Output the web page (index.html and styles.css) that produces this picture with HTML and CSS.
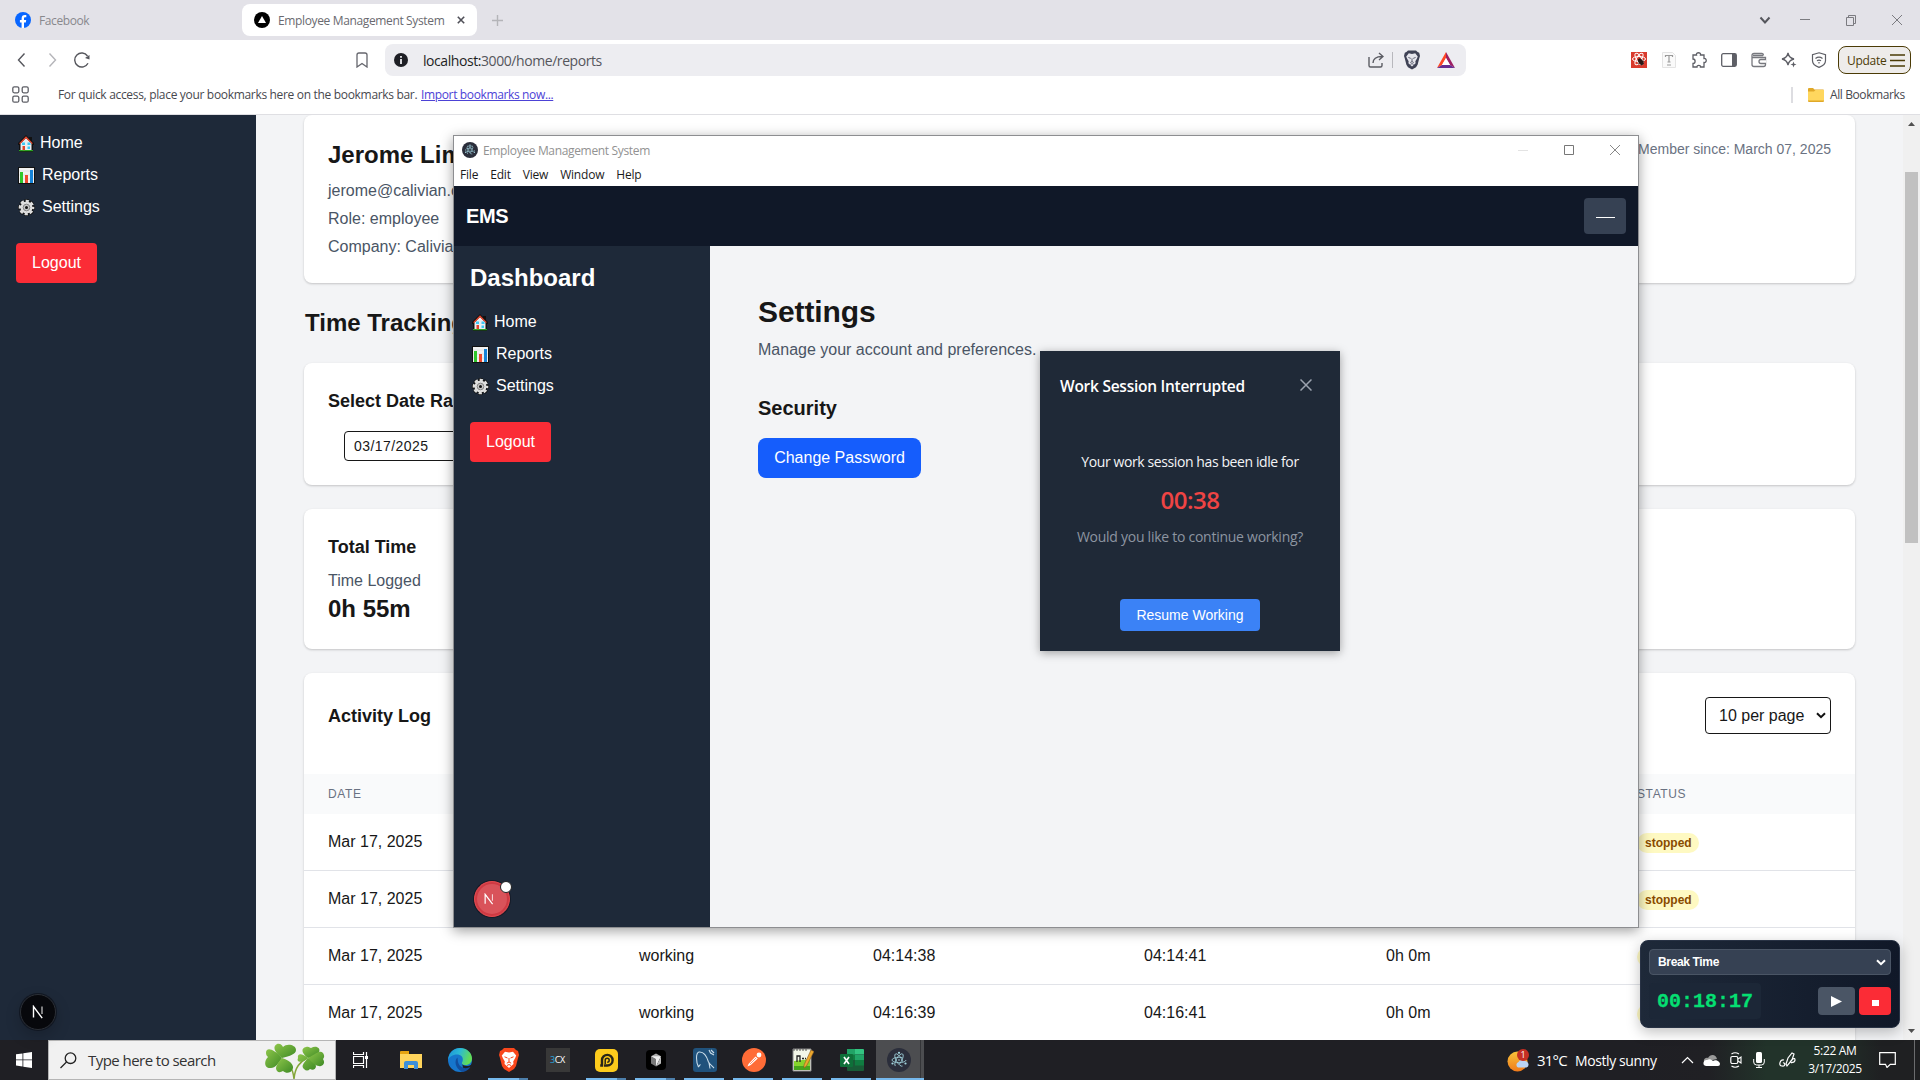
FILE: index.html
```html
<!DOCTYPE html>
<html lang="en">
<head>
<meta charset="utf-8">
<title>Employee Management System</title>
<link rel="stylesheet" href="styles.css">
</head>
<body>
<svg class="defs" width="0" height="0" aria-hidden="true">
  <symbol id="house" viewBox="0 0 16 17"><path d="M8 0 0 8v2h1v7h14v-7h1V8l-2-2V2h-3v1z" fill="#111"/><path d="M8 3 2.500 8.500V15h11V8.500z" fill="#e9eef2"/><path d="m8 1.200-6.800 7 1 .9L8 3.300l5.800 5.800 1-.9z" fill="#e8452c"/><path d="M4 7.500h3v2.500H4zM9.500 7.500h3V10h-3zM9.500 11.500h2.500V14H9.500z" fill="#3fc8f4"/><path d="M4.500 11h2.500v4.500H4.500z" fill="#e0452c"/><path d="M1 15.200h14v1H1z" fill="#35c52c"/></symbol>
  <symbol id="chart" viewBox="0 0 17 17"><path d="M0 0h17v17H0z" fill="#111"/><path d="M1 1h15v15H1z" fill="#f1f1f1"/><path d="M1 4h15M1 8h15M1 12h15" stroke="#d8dde0" stroke-width=".7"/><path d="M2 5h3v11H2z" fill="#2fc62b"/><path d="M7 8h3v8H7z" fill="#f0482d"/><path d="M12 3h3v13h-3z" fill="#1683d8"/></symbol>
  <symbol id="gear" viewBox="0 0 17 17"><circle cx="8.500" cy="8.500" r="7.200" fill="#111"/><circle cx="8.500" cy="8.500" r="7" fill="none" stroke="#111" stroke-width="3" stroke-dasharray="3.900 1.598" stroke-dashoffset="1.950"/><circle cx="8.500" cy="8.500" r="6" fill="#dedede"/><circle cx="8.500" cy="8.500" r="6.500" fill="none" stroke="#dedede" stroke-width="2.600" stroke-dasharray="3.200 1.905" stroke-dashoffset="1.600"/><circle cx="8.500" cy="8.500" r="3.300" fill="#c8c8c8" stroke="#858585"/><circle cx="8.500" cy="8.500" r="1.500" fill="#111"/></symbol>
  <symbol id="electron" viewBox="0 0 24 24"><circle cx="12" cy="12" r="12" fill="#2b2e3b"/><g fill="none" stroke="#a3d5e0" stroke-width=".8"><ellipse cx="12" cy="12" rx="7" ry="2.700" stroke-dasharray="27 5" transform="rotate(0 12 12)"/><ellipse cx="12" cy="12" rx="7" ry="2.700" stroke-dasharray="27 5" transform="rotate(60 12 12)"/><ellipse cx="12" cy="12" rx="7" ry="2.700" stroke-dasharray="27 5" transform="rotate(120 12 12)"/></g><g fill="#a3d5e0"><circle cx="12" cy="12" r=".8"/><circle cx="5.500" cy="15.500" r="1.100"/><circle cx="18.500" cy="15.500" r="1.100"/><circle cx="12" cy="4.800" r="1.100"/></g></symbol>
  <symbol id="lion" viewBox="0 0 20 24"><path d="M5 0h10l2 2 2 1 1 4-1 3-2 8-2 3-5 3-5-3-2-3-2-8-1-3 1-4 2-1z" fill="var(--shield)"/><path d="m10 4.500 4-.8 3.200 3.800-1 2.500-2 3.500.3 2.500-4.500 4-4.500-4 .3-2.500-2-3.500-1-2.500L6 3.700z" fill="var(--face)"/><path d="m5.500 8.800 3 1.200M14.500 8.800l-3 1.200M10 10v4M7.800 15.200 10 14l2.200 1.200M8 17.500l2-1 2 1" stroke="var(--shield)" stroke-width="1" fill="none"/></symbol>
  <symbol id="nlogo" viewBox="0 0 14 14"><path d="M2.500 12.500v-11l8.700 11.600" fill="none" stroke="#fff" stroke-width="1.400"/><path d="M11 1.500v7.500" stroke="#fff" stroke-width="1.300" opacity=".75"/></symbol>
</svg>

<header class="tabs">
  <div class="tab tab-idle">
    <svg width="16" height="16" viewBox="0 0 16 16"><circle cx="8" cy="8" r="8" fill="#0866ff"/><path d="M6.600 16v-5.600H4.900V8h1.700V6.700c0-2.700 1.200-3.700 3.400-3.700l1.300.1v2.200h-.9c-1.100 0-1.400.4-1.400 1.500V8h2.200l-.4 2.400H9V16z" fill="#fff"/></svg>
    <span class="t-fb">Facebook</span>
  </div>
  <div class="tab tab-active">
    <svg width="16" height="16" viewBox="0 0 16 16"><circle cx="8" cy="8" r="8"/><path d="m8 4 4 7H4z" fill="#fff"/></svg>
    <span class="t-tab">Employee Management System</span>
    <svg class="tab-x" width="8" height="8" viewBox="0 0 8 8"><path d="m.8.800 6.400 6.400M7.200.8.800 7.200" stroke="#505058" stroke-width="1.600"/></svg>
  </div>
  <svg class="plus" width="11" height="11" viewBox="0 0 11 11"><path d="M5.500 0v11M0 5.500h11" stroke="#b4b4b8" stroke-width="1.400"/></svg>
  <div class="win-ctl">
    <svg width="12" height="12" viewBox="0 0 12 12"><path d="m1.500 3.500 4.500 5 4.500-5" fill="none" stroke="#55565c" stroke-width="2"/></svg>
    <svg width="12" height="12" viewBox="0 0 12 12"><path d="M1 5.500h10" stroke="#7b7b80"/></svg>
    <svg width="12" height="12" viewBox="0 0 12 12"><path d="M1.500 3.500h7v8h-7zM3.500 3.500v-2h7v8h-2" fill="none" stroke="#7b7b80"/></svg>
    <svg width="12" height="12" viewBox="0 0 12 12"><path d="m1 1 10 10M11 1 1 11" stroke="#7b7b80"/></svg>
  </div>
</header>

<div class="toolbar">
  <div class="nav">
    <svg width="16" height="16" viewBox="0 0 16 16"><path d="m10.500 1.500-6 6.500 6 6.500" fill="none" stroke="#55565c" stroke-width="1.400"/></svg>
    <svg width="16" height="16" viewBox="0 0 16 16"><path d="m5.500 1.500 6 6.500-6 6.500" fill="none" stroke="#b5b5b9" stroke-width="1.400"/></svg>
    <svg width="16" height="16" viewBox="0 0 16 16"><path d="M14 11.200A7 7 0 1 1 13.500 4" fill="none" stroke="#55565c" stroke-width="1.400"/><path d="M15.500 3v4.500L11 6z" fill="#55565c"/></svg>
  </div>
  <svg class="mark" width="12" height="16" viewBox="0 0 12 16"><path d="M1 3a2 2 0 0 1 2-2h6a2 2 0 0 1 2 2v12l-5-3.500L1 15z" fill="none" stroke="#65666d" stroke-width="1.300"/></svg>
  <div class="address">
    <svg width="14" height="14" viewBox="0 0 14 14"><circle cx="7" cy="7" r="7" fill="#1e1f25"/><path d="M7 3v1.800M7 6v5" stroke="#ededf1" stroke-width="1.800"/></svg>
    <span class="url">localhost:<span>3000/home/reports</span></span>
    <div class="address-end">
      <svg width="16" height="16" viewBox="0 0 16 16"><path d="M1 5v8.500q0 1.500 1.500 1.500h10q1.500 0 1.500-1.500V11M5 11c0-4 3-6.500 9-6.500M11 1l4 3.500L11 8" fill="none" stroke="#5b5c63" stroke-width="1.400"/></svg>
      <i></i>
      <svg class="lion-dark" width="16" height="20"><use href="#lion"/></svg>
      <svg class="bat" width="18" height="16" viewBox="0 0 18 16"><path d="M9 0 0 16l5-3 4-7z" fill="#ff4724"/><path d="m9 0 9 16-5-3-4-7z" fill="#9e1f63"/><path d="m0 16 5-3h8l5 3z" fill="#662d91"/><path d="m9 6 4 7H5z" fill="#fff"/></svg>
    </div>
  </div>
  <div class="exts">
    <svg width="16" height="16" viewBox="0 0 16 16"><path d="M0 0h16v16H0z" fill="#d93a2c"/><g fill="none" stroke="#fff" stroke-width="1"><ellipse cx="8" cy="7" rx="6.500" ry="2.500"/><ellipse cx="8" cy="7" rx="6.500" ry="2.500" transform="rotate(60 8 7)"/><ellipse cx="8" cy="7" rx="6.500" ry="2.500" transform="rotate(120 8 7)"/></g><ellipse cx="9.800" cy="9.800" rx="2.300" ry="3.600" transform="rotate(-35 9.800 9.800)" fill="#2b1815"/><path d="m7.500 8 5.500 4M7 12l6-3M8.500 6.500l2 7" stroke="#2b1815" stroke-width=".7"/></svg>
    <svg width="16" height="16" viewBox="0 0 16 16"><path d="M1.500.5h10l3 3v12h-13z" fill="#fafafa" stroke="#e4e4e4"/><path d="M4.500 5V3.500h7V5M8 3.500V10M6.500 10h3M6 13h4" fill="none" stroke="#999" stroke-width="1.200"/></svg>
    <svg width="16" height="16" viewBox="0 0 16 16"><path d="M2 3h3.500c-.8-3 4.800-3 4 0H13v3.500c3-.6 3 4.600 0 4V15H9.500c.5-2.300-3.800-2.300-3.500 0H2v-3.500c2.800 0 2.800-4.500 0-4.500z" fill="none" stroke="#5e5f66" stroke-width="1.300"/></svg>
    <svg width="16" height="16" viewBox="0 0 16 16"><rect x=".7" y="1.700" width="14.600" height="12.600" rx="1.500" fill="none" stroke="#5e5f66" stroke-width="1.300"/><path d="M11 2h4v12h-4z" fill="#5e5f66"/></svg>
    <svg width="16" height="16" viewBox="0 0 16 16"><path d="M1 4V12.500Q1 14.500 3 14.500h9.500q2 0 2-2V5.500H1V3.500Q1 1.500 3 1.500h8q1.500 0 1.500 2M2 3.500h10" fill="none" stroke="#77787e" stroke-width="1.300"/><path d="M15 7.500h-5a1.800 1.800 0 0 0 0 4h5" fill="#fff" stroke="#77787e" stroke-width="1.300"/></svg>
    <svg width="16" height="16" viewBox="0 0 16 16"><path d="M7 1q1 5 6 6-5 1-6 6Q6 8 1 7q5-1 6-6z" fill="none" stroke="#5e5f66" stroke-width="1.300"/><path d="m12.500 9.500.8 2.200 2.200.8-2.200.8-.8 2.200-.8-2.200-2.200-.8 2.200-.8z" fill="#5e5f66"/></svg>
    <svg width="16" height="16" viewBox="0 0 16 16"><path d="m8 .8 6.500 2v6c0 3.400-3 5.400-6.500 6.600-3.500-1.200-6.500-3.200-6.500-6.600v-6zM4.500 6.500q3.500-2.700 7 0M6 8.800q2-1.500 4 0M8 10v1.500" fill="none" stroke="#5e5f66" stroke-width="1.200"/></svg>
  </div>
  <div class="update"><span class="t-update">Update</span><svg width="15" height="13" viewBox="0 0 15 13"><path d="M0 1h15M0 6.500h15M0 12h15" stroke="#4b3b06" stroke-width="1.400"/></svg></div>
</div>

<div class="bookmarks">
  <svg width="17" height="17" viewBox="0 0 17 17"><g fill="none" stroke="#5e5f66" stroke-width="1.300"><rect x=".8" y=".8" width="6" height="6" rx="1.500"/><rect x="10.200" y=".8" width="6" height="6" rx="1.500"/><rect x=".8" y="10.200" width="6" height="6" rx="1.500"/><rect x="10.200" y="10.200" width="6" height="6" rx="1.500"/></g></svg>
  <span class="t-hint">For quick access, place your bookmarks here on the bookmarks bar.</span>
  <a class="t-import">Import bookmarks now...</a>
  <div class="all-bm"><i></i><svg width="16" height="14" viewBox="0 0 16 14"><path d="M0 1q0-1 1-1h4l1.500 1.500H15q1 0 1 1V13q0 1-1 1H1q-1 0-1-1z" fill="#e0a828"/><path d="M0 3.500h6L7.500 2H16v10.500H0z" fill="#ffd75e"/></svg><span class="t-all">All Bookmarks</span></div>
</div>

<main class="page">
  <aside class="side">
    <nav>
      <div class="link"><svg width="16" height="17"><use href="#house"/></svg><span>Home</span></div>
      <div class="link"><svg width="17" height="17"><use href="#chart"/></svg><span>Reports</span></div>
      <div class="link"><svg width="17" height="17"><use href="#gear"/></svg><span>Settings</span></div>
    </nav>
    <button class="logout">Logout</button>
    <div class="next"><svg width="14" height="14"><use href="#nlogo"/></svg></div>
  </aside>
  <section class="content">
    <div class="card profile">
      <div><h2>Jerome Lim</h2><p>jerome@calivian.com</p><p>Role: employee</p><p>Company: Calivian</p></div>
      <span class="since">Member since: March 07, 2025</span>
    </div>
    <h2 class="tt">Time Tracking</h2>
    <div class="card range"><h3>Select Date Range</h3><div class="date">03/17/2025</div></div>
    <div class="card total"><h3>Total Time</h3><p>Time Logged</p><strong>0h 55m</strong></div>
    <div class="card log">
      <div class="log-head"><h3>Activity Log</h3><div class="per">10 per page<svg width="10" height="7" viewBox="0 0 10 7"><path d="m1 1.200 4 4 4-4" fill="none" stroke="#111" stroke-width="2"/></svg></div></div>
      <div class="row th"><span>DATE</span><span></span><span></span><span></span><span></span><span>STATUS</span></div>
      <div class="row"><span>Mar 17, 2025</span><span></span><span></span><span></span><span></span><span><b>stopped</b></span></div>
      <div class="row"><span>Mar 17, 2025</span><span></span><span></span><span></span><span></span><span><b>stopped</b></span></div>
      <div class="row"><span>Mar 17, 2025</span><span>working</span><span>04:14:38</span><span>04:14:41</span><span>0h 0m</span><span><b></b></span></div>
      <div class="row"><span>Mar 17, 2025</span><span>working</span><span>04:16:39</span><span>04:16:41</span><span>0h 0m</span><span><b></b></span></div>
    </div>
  </section>
  <div class="scroll">
    <svg width="7" height="4" viewBox="0 0 7 4"><path d="M0 4h7L3.500 0z" fill="#505050"/></svg>
    <div class="thumb"></div>
    <svg width="7" height="4" viewBox="0 0 7 4"><path d="M0 0h7L3.500 4z" fill="#505050"/></svg>
  </div>
</main>

<section class="window">
  <div class="w-title"><svg width="16" height="16"><use href="#electron"/></svg><span class="t-win">Employee Management System</span>
    <div class="w-ctl">
      <svg width="10" height="10" viewBox="0 0 10 10"><path d="M0 5.500h10" stroke="#e3e3e3"/></svg>
      <svg width="10" height="10" viewBox="0 0 10 10"><path d="M.5.500h9v9h-9z" fill="none" stroke="#777"/></svg>
      <svg width="10" height="10" viewBox="0 0 10 10"><path d="m0 0 10 10M10 0 0 10" stroke="#888"/></svg>
    </div>
  </div>
  <div class="w-menu"><span>File</span><span>Edit</span><span>View</span><span>Window</span><span>Help</span></div>
  <div class="w-bar"><b>EMS</b><div class="w-min"><i></i></div></div>
  <div class="w-body">
    <aside class="side inner">
      <h2>Dashboard</h2>
      <nav>
        <div class="link"><svg width="16" height="17"><use href="#house"/></svg><span>Home</span></div>
        <div class="link"><svg width="17" height="17"><use href="#chart"/></svg><span>Reports</span></div>
        <div class="link"><svg width="17" height="17"><use href="#gear"/></svg><span>Settings</span></div>
      </nav>
      <button class="logout">Logout</button>
      <div class="next err"><svg width="12" height="12"><use href="#nlogo"/></svg></div>
    </aside>
    <div class="settings">
      <h1>Settings</h1>
      <p>Manage your account and preferences.</p>
      <h3>Security</h3>
      <button class="change">Change Password</button>
    </div>
  </div>
</section>

<section class="dialog">
  <div class="d-head"><span class="t-dt">Work Session Interrupted</span><svg width="12" height="12" viewBox="0 0 12 12"><path d="m.5.500 11 11M11.500.5l-11 11" stroke="#9ca3af" stroke-width="1.500"/></svg></div>
  <span class="d-1">Your work session has been idle for</span>
  <span class="d-2">00:38</span>
  <span class="d-3">Would you like to continue working?</span>
  <button class="resume">Resume Working</button>
</section>

<section class="timer">
  <div class="t-select">Break Time<svg width="10" height="7" viewBox="0 0 10 7"><path d="m1 1.200 4 4 4-4" fill="none" stroke="#fff" stroke-width="2"/></svg></div>
  <div class="t-row"><span class="clock">00:18:17</span>
    <div class="play"><svg width="11" height="11" viewBox="0 0 11 11"><path d="M0 0v11l11-5.500z" fill="#fff"/></svg></div>
    <div class="stop"><i></i></div>
  </div>
</section>

<footer class="taskbar">
  <div class="start"><svg width="16" height="16" viewBox="0 0 16 16"><path d="M0 2.300 6.500 1.400v6.100H0zM7.300 1.300 16 0v7.500H7.300zM0 8.300h6.500v6.200L0 13.600zM7.300 8.300H16V16l-8.700-1.300z" fill="#fff"/></svg></div>
  <div class="search">
    <svg width="17" height="17" viewBox="0 0 17 17"><circle cx="10.500" cy="6.200" r="5.300" fill="none" stroke="#222" stroke-width="1.300"/><path d="m6.500 10-6 6" stroke="#222" stroke-width="1.300"/></svg>
    <span class="t-search">Type here to search</span>
    <svg class="clover" width="60" height="36" viewBox="0 0 60 36"><defs><linearGradient id="lf" x1="0" y1="0" x2="1" y2="1"><stop offset="0" stop-color="#8ec64a"/><stop offset="1" stop-color="#3e8a25"/></linearGradient></defs><path d="M17 17c8 3 11 9 12 19M42 15c-7 4-12 9-13 21" fill="none" stroke="#84a63a" stroke-width="1.500"/><g fill="url(#lf)"><path d="M17 15C8 8 8 3 12 1c3-1 5 1 6 3 4-4 13-2 13 3 0 4-6 6-14 8z"/><path d="M17 15C8 5 1 4 1 10c0 2 1 3 2 4-5 5-3 12 3 11 4 0 8-5 11-10z"/><path d="M17 15c-6 7-7 10-5 13 2 2 4 1 6 0 3 3 8 2 9-1 3-3 0-9-10-12z"/><path d="M43 15c-7-5-7-10-2-11 3-1 4 1 5 1 5-3 10 0 8 4-1 3-5 5-11 6z"/><path d="M43 15c-7-6-11-4-10 0-2 4 3 6 10 0zM43 15c-5 6-7 8-4 11 2 2 4 2 6 0 3 2 6 0 6-3-1-4-4-6-8-8z"/><path d="M43 15c9-5 12-8 15-5 2 3 1 5 0 6 3 5-1 8-4 7-4 0-7-4-11-8z"/></g></svg>
  </div>
  <div class="slot"><svg width="16" height="16" viewBox="0 0 16 16"><path d="M.5 0v2.500h10V0M.5 16v-2.500h10V16M.5 4.500h10v7H.5zM13.500 0v16" fill="none" stroke="#fff" stroke-width="1.200"/><path d="M12 4h3v3h-3z" fill="#fff"/></svg></div>
  <div class="slot"><svg width="22" height="19" viewBox="0 0 22 19"><path d="M0 1q0-1 1-1h8v3h12q1 0 1 1v13H0z" fill="#e6a311"/><path d="M0 3h22v14H0z" fill="#ffd45c"/><path d="M4 18v-6q0-2 2-2h10q2 0 2 2v6h-4v-4H8v4z" fill="#3d8fd9"/></svg></div>
  <div class="slot"><svg width="24" height="24" viewBox="0 0 24 24"><defs><linearGradient id="ed" x1="0" y1="0" x2="1" y2=".3"><stop offset="0" stop-color="#1b8fd8"/><stop offset=".5" stop-color="#2bb9d6"/><stop offset="1" stop-color="#62dc57"/></linearGradient></defs><circle cx="12" cy="12" r="12" fill="#1676cc"/><path d="M14 15c0 2 3 3.500 6 3 1.500-.3 3-1 4-2v8h-8z" fill="#202024"/><path d="M0 12C1 4 6 0 12 0c7 0 12 5 12 10.500 0 4-3 6.500-6.500 6.500-3 0-4.500-1.500-3-3.500C16 9 12.500 6.500 9 6.500 4.500 6.500 1 9 0 12z" fill="url(#ed)"/><path d="M9.500 9.500c-3.500 3-2.500 11 4.500 14.300 4 0 7-2.300 8.300-4.800-5 2.600-10.500.5-12-4-.6-2-.5-4-.8-5.500z" fill="#114f9f"/></svg></div>
  <div class="slot run multi"><svg class="lion-red" width="20" height="24"><use href="#lion"/></svg></div>
  <div class="slot"><div class="cx"><em>3</em>CX</div></div>
  <div class="slot run multi"><svg width="23" height="23" viewBox="0 0 23 23"><rect width="23" height="23" rx="5" fill="#fdcb1c"/><path d="M9 16.500h3.300a5.300 5.300 0 1 0-5.300-5.300v5.300H5.200" fill="none" stroke="#292518" stroke-width="2.400"/><path d="M10.200 15v-3.800a2 2 0 1 1 2 2" fill="none" stroke="#292518" stroke-width="1.500"/></svg></div>
  <div class="slot run multi"><svg width="20" height="20" viewBox="0 0 20 20"><rect width="20" height="20" rx="4" fill="#000"/><path d="m10 3.500 5 2.800-5 2.800-5-2.800z" fill="#aaa"/><path d="M5 6.300 10 9v7.500l-5-3z" fill="#777"/><path d="M5 6.300h10l-5 10.200V9z" fill="#eee"/><path d="M15 6.300v7.200l-5 3z" fill="#bbb"/></svg></div>
  <div class="slot run"><svg width="24" height="24" viewBox="0 0 24 24"><rect width="24" height="24" rx="3" fill="#20527c"/><path d="M5.500 19C3 14 2.500 5 6 4c5-.5 8 5 9.500 10 1 2 3 3.500 5.500 6M5.500 19c.5-1 1-2 2-2.500M16 15l1 5.500M16 2l1.500 3L21 7M18 2l3 3" fill="none" stroke="#c9dce9" stroke-width="1.100"/></svg></div>
  <div class="slot run"><svg width="24" height="24" viewBox="0 0 24 24"><circle cx="12" cy="12" r="12" fill="#ff6c37"/><path d="m5.500 18.500 1-2.500 7-7.500 2.300 2-7 6.500z" fill="#fff"/><path d="m8 16 6-6" stroke="#ff6c37" stroke-width=".7"/><circle cx="17" cy="7" r="2.400" fill="#fff"/></svg></div>
  <div class="slot run"><svg width="22" height="24" viewBox="0 0 22 24"><path d="M1 1h18v22H1z" fill="#f3f6e8" stroke="#888"/><path d="M2 13q9-1 16-2v11H2z" fill="#86d52c"/><path d="M2 18h16v4H2z" fill="#46a51c"/><path d="M5 14V8h3v6M10 10.500h2M13 10.500h1" fill="none" stroke="#222" stroke-width="1.300"/><path d="m12 17 7-15 3 1.500-7.500 14.500-2.500 2z" fill="#eca72d" stroke="#8a5b22" stroke-width=".6"/><path d="M2 1v2M5 1v2M8 1v2M11 1v2M14 1v2" stroke="#555"/></svg></div>
  <div class="slot run"><svg width="24" height="22" viewBox="0 0 24 22"><path d="M7 0h8v11H7z" fill="#21a366"/><path d="M15 0h8q1 0 1 1v4.500h-9z" fill="#33c481"/><path d="M7 5.500h8V11H7z" fill="#107c41"/><path d="M15 5.500h9V11h-9z" fill="#21a366"/><path d="M7 11h17v10q0 1-1 1H8q-1 0-1-1z" fill="#185c37"/><path d="M15 11h9v5.500h-9z" fill="#107c41"/><rect y="5" width="13" height="13" rx="1" fill="#0e7039"/><path d="m4 8 5 7M9 8l-5 7" stroke="#fff" stroke-width="1.700"/></svg></div>
  <div class="slot run current"><svg width="24" height="24"><use href="#electron"/></svg></div>
  <div class="tray">
    <div class="weather"><svg width="23" height="23" viewBox="0 0 23 23"><defs><linearGradient id="sun" x1="0" y1="0" x2="0" y2="1"><stop offset="0" stop-color="#f9c33a"/><stop offset="1" stop-color="#ef7a1b"/></linearGradient></defs><circle cx="10.500" cy="12.500" r="10" fill="url(#sun)"/><path d="M11 18.500a3 3 0 0 1 .5-5.500 4 4 0 0 1 6.500-1 3.400 3.400 0 0 1 1.500 6.500z" fill="#b9d4f5"/></svg><em>1</em></div>
    <span class="t-temp">31°C</span><span class="t-sun">Mostly sunny</span>
    <svg class="up" width="13" height="8" viewBox="0 0 13 8"><path d="m1 7 5.500-5.500L12 7" fill="none" stroke="#fff" stroke-width="1.200"/></svg>
    <svg class="cloud" width="17" height="11" viewBox="0 0 17 11"><path d="M1 7C0 3 4 2 5 3c2-4 8-4 9 1z" fill="#999"/><path d="M3 11a3 3 0 0 1 1-6c3-2 5 0 6 1 3-2 7 1 7 3q0 2-2 2z" fill="#fff"/></svg>
    <svg class="meet" width="12" height="16" viewBox="0 0 12 16"><rect x=".8" y="4.500" width="7" height="7" rx="1.500" fill="none" stroke="#fff" stroke-width="1.200"/><path d="M8 7l3-2v6L8 9M1.500 2Q5-.5 9 2M1.500 14q3.500 2.500 7.500 0" fill="none" stroke="#fff" stroke-width="1.100"/></svg>
    <svg class="mic" width="12" height="16" viewBox="0 0 12 16"><rect x="3" width="6" height="11" rx="1.500" fill="#fff"/><path d="M.7 7v3q0 3 3 3h4.600q3 0 3-3V7M6 13v3M3 15.500h6" fill="none" stroke="#fff"/></svg>
    <svg class="pen" width="17" height="16" viewBox="0 0 17 16"><path d="M5 8c-4-1-6 6-2 6 4 1 3-4 1-3M7 12 9 6l4-5 2 1-2 6-5 6zM11 10c2-3 5-5 5-2s-3 2-4 3" fill="none" stroke="#fff" stroke-width="1.200"/></svg>
    <div class="when"><span class="t-time">5:22 AM</span><span class="t-date">3/17/2025</span></div>
    <svg class="note" width="17" height="16" viewBox="0 0 17 16"><path d="M.7.700h15.600v11.600h-5L8 15.500l-1.500-3.200H.7z" fill="none" stroke="#fff" stroke-width="1.200"/></svg>
    <i class="peek"></i>
  </div>
</footer>
</body>
</html>
```
FILE: styles.css
```css
* { box-sizing: border-box; }
body { margin: 0; width: 1920px; height: 1080px; overflow: hidden; position: relative; display: flex; flex-direction: column; background: #fff; font-family: "Liberation Sans", Arial, sans-serif; color: #171717; }
h1, h2, h3, p { margin: 0; }
svg { display: block; flex: none; }
i, em { font-style: normal; }
span { white-space: nowrap; }
button { font: 16px/24px "Liberation Sans", Arial, sans-serif; border: 0; color: #fff; padding: 8px 0; text-align: center; display: block; white-space: nowrap; }
.defs { position: absolute; }
.tabs, .toolbar, .bookmarks, .w-title, .w-menu, .taskbar, .dialog { font-family: "Open Sans", "Noto Sans", sans-serif; }

/* browser chrome */
.tabs { height: 40px; flex: none; background: #e3e2e8; display: flex; align-items: center; font-size: 12px; color: #6a6a70; }
.tab { display: flex; align-items: center; gap: 8px; }
.tab-idle { width: 242px; padding-left: 15px; color: #88888d; }
.tab-active { width: 235px; height: 32px; background: #fff; border-radius: 8px; padding-left: 12px; }
.t-fb { letter-spacing: -.4px; }
.t-tab { width: 167px; letter-spacing: -.36px; }
.tab-x { margin-left: 4px; }
.plus { margin-left: 15px; }
.win-ctl { margin-left: auto; margin-right: 17px; display: flex; gap: 34px; }
.win-ctl svg:first-child { margin-right: -6px; }
.toolbar { height: 40px; flex: none; display: flex; align-items: center; }
.nav { display: flex; gap: 14px; padding-left: 14px; width: 356px; }
.mark { margin-right: 17px; }
.address { width: 1081px; height: 32px; background: #ededf1; border-radius: 8px; display: flex; align-items: center; padding-left: 9px; }
.url { margin-left: 15px; font-size: 14px; color: #1e1f25; letter-spacing: -.43px; }
.url span { color: #55565c; }
.address-end { margin-left: auto; display: flex; align-items: center; }
.address-end i { width: 1px; height: 16px; background: #b8b8bd; margin: 0 11px 0 8px; }
.lion-dark { --shield: #3f4255; --face: #e5e5ec; }
.bat { margin: 0 11px 0 17px; }
.exts { display: flex; gap: 14px; margin-left: 165px; }
.update { width: 73px; height: 28px; margin-left: 11px; border: 1px solid #4b3b06; border-radius: 8px; background: #eeecea; display: flex; align-items: center; padding-left: 8px; gap: 4px; color: #4b3b06; font-size: 12px; }
.t-update { width: 39px; letter-spacing: -.3px; }
.bookmarks { height: 35px; flex: none; border-bottom: 1px solid #dfdfe3; display: flex; align-items: center; padding: 0 15px 5px 12px; font-size: 12px; color: #47484e; }
.t-hint { margin-left: 29px; width: 363px; letter-spacing: -.32px; }
.t-import { color: #4c42d6; text-decoration: underline; letter-spacing: -.36px; }
.all-bm { margin-left: auto; display: flex; align-items: center; }
.all-bm i { width: 2px; height: 16px; background: #dddde1; margin-right: 15px; }
.t-all { margin-left: 6px; width: 75px; letter-spacing: -.4px; }

/* reports page */
.page { flex: none; height: 925px; display: flex; background: #f3f4f6; }
.side { position: relative; width: 256px; flex: none; background: #1e2939; color: #fff; padding: 12px 16px; font-size: 16px; }
.link { height: 32px; display: flex; align-items: center; padding-left: 2px; gap: 6px; }
.link span { letter-spacing: 0; }
.link svg[width="17"] { margin-right: 1px; }
.logout { margin-top: 20px; width: 81px; background: #fb2c36; border-radius: 4px; }
.next { position: absolute; left: 20px; bottom: 10px; width: 36px; height: 36px; border-radius: 50%; background: #07080c; border: 1px solid #2b2f36; box-shadow: 0 0 0 1px #111722, 0 6px 16px rgba(0,0,0,.2); display: flex; align-items: center; justify-content: center; }
.next.err { background: #d9535a; border: 1px solid #e5484d; box-shadow: 0 0 0 1px #151b28, inset 0 0 0 2px #ce3a43; padding-right: 7px; }
.next.err::after { content: ""; position: absolute; right: -3px; top: -1px; width: 10px; height: 10px; border-radius: 50%; background: #fff; border: 1px solid #222; }
.content { width: 1647px; flex: none; padding: 0 48px; overflow: hidden; }
.card { background: #fff; border-radius: 8px; box-shadow: 0 1px 3px rgba(0,0,0,.1), 0 1px 2px rgba(0,0,0,.1); padding: 24px; }
h2 { font-size: 24px; line-height: 32px; }
h3 { font-size: 18px; line-height: 28px; }
p { color: #4a5565; font-size: 16px; line-height: 24px; }
.profile { height: 168px; display: flex; justify-content: space-between; }
.profile h2 { margin-bottom: 8px; }
.profile p { margin-bottom: 4px; }
.since { font-size: 14px; line-height: 20px; color: #6a7282; letter-spacing: 0; }
.tt { margin: 24px 0; padding-left: 1px; }
.range { height: 122px; }
.date { margin: 16px 0 0 16px; width: 160px; height: 30px; border: 1px solid #171717; border-radius: 4px; font-size: 14px; line-height: 28px; padding-left: 9px; letter-spacing: .45px; }
.total { height: 140px; margin-top: 24px; }
.total p { margin-top: 8px; }
.total strong { font-size: 24px; line-height: 32px; display: block; }
.log { height: 400px; margin-top: 24px; padding: 0; }
.log-head { height: 101px; padding: 24px; display: flex; justify-content: space-between; align-items: flex-start; }
.log-head h3 { margin-top: 5px; }
.per { width: 126px; height: 37px; border: 1px solid #171717; border-radius: 4px; padding: 0 4px 0 13px; font-size: 16px; display: flex; align-items: center; justify-content: space-between; }
.row { height: 57px; display: grid; grid-template-columns: 311px 234px 271px 242px 251px 1fr; align-items: center; padding-left: 24px; border-bottom: 1px solid #e1e3e8; font-size: 16px; }
.row.th { height: 40px; background: #f9fafb; border: 0; font-size: 12px; color: #6a7282; letter-spacing: .6px; }
.row b { display: inline-block; width: 62px; font-size: 12px; line-height: 20px; height: 20px; padding: 0 8px; border-radius: 10px; background: #fef9c2; color: #894b00; vertical-align: middle; margin-top: 2px; }
.scroll { width: 17px; background: #f0f0f0; display: flex; flex-direction: column; align-items: center; padding: 7px 0 7px; }
.thumb { width: 13px; height: 371px; margin: 46px 0 auto; background: #c1c1c1; }

/* desktop app window */
.window { position: absolute; left: 453px; top: 135px; width: 1186px; height: 793px; border: 1px solid #8d8e91; background: #fff; box-shadow: 0 3px 12px rgba(0,0,0,.38); display: flex; flex-direction: column; }
.w-title { height: 28px; display: flex; align-items: center; padding: 0 18px 0 8px; font-size: 12px; color: #929292; }
.t-win { margin-left: 5px; letter-spacing: -.34px; }
.w-ctl { margin-left: auto; display: flex; gap: 36px; }
.w-menu { height: 22px; display: flex; align-items: center; padding: 0 0 1px 6px; gap: 12px; font-size: 12px; color: #1b1b1b; letter-spacing: -.2px; }
.w-bar { height: 60px; flex: none; background: #101828; color: #fff; display: flex; align-items: center; justify-content: space-between; padding: 0 12px; font-size: 20px; }
.w-bar b { letter-spacing: -.4px; }
.w-min { width: 42px; height: 36px; background: #364153; border-radius: 4px; display: flex; align-items: center; justify-content: center; }
.w-min i { width: 19px; height: 1.5px; background: #fff; margin-top: 3px; }
.w-body { flex: 1; display: flex; background: #f3f4f6; }
.inner { padding-top: 16px; }
.inner h2 { margin-bottom: 12px; }
.settings { padding: 46px 48px; }
h1 { font-size: 30px; line-height: 40px; letter-spacing: -.1px; }
.settings p { margin-top: 6px; }
.settings h3 { font-size: 20px; margin: 32px 0 16px; }
.change { width: 163px; border-radius: 8px; background: #155dfc; }

/* idle dialog */
.dialog { position: absolute; left: 1040px; top: 351px; width: 300px; height: 300px; background: #1f2937; color: #fff; box-shadow: 0 2px 9px rgba(0,0,0,.35); display: flex; flex-direction: column; align-items: center; padding-top: 23px; font-size: 14px; }
.d-head { width: 100%; height: 24px; padding: 0 28px 0 20px; display: flex; align-items: center; justify-content: space-between; }
.d-head svg { margin-bottom: 2px; }
.t-dt { font-size: 15.5px; font-weight: 600; letter-spacing: -.26px; }
.d-1 { margin-top: 54px; line-height: 20px; color: #f3f4f6; letter-spacing: -.4px; }
.d-2 { margin-top: 12px; font-size: 24px; line-height: 32px; font-weight: 600; color: #ef4444; letter-spacing: -.5px; }
.d-3 { margin-top: 11px; line-height: 20px; color: #8d95a1; letter-spacing: -.26px; }
.resume { margin-top: 52px; width: 140px; height: 32px; padding: 0; font-size: 14px; line-height: 32px; background: #3b82f6; border-radius: 4px; }

/* floating timer */
.timer { position: absolute; left: 1640px; top: 940px; width: 260px; height: 88px; border-radius: 8px; background: linear-gradient(90deg, #1e2939, #101828); border: 1px solid #283244; box-shadow: 0 4px 14px rgba(0,0,0,.25); padding: 8px; color: #fff; }
.t-select { height: 26px; background: #364153; border: 1px solid #4a5565; border-radius: 4px; font-size: 12px; font-weight: 700; letter-spacing: -.35px; padding: 0 4px 0 8px; display: flex; align-items: center; justify-content: space-between; }
.t-row { height: 36px; margin-top: 8px; display: flex; align-items: center; }
.clock { width: 112px; height: 36px; border-radius: 4px; background: #1c2737; font: bold 20px/38px "Liberation Mono", monospace; color: #05df72; padding-left: 8px; margin-right: auto; -webkit-text-stroke: .3px #05df72; }
.play, .stop { height: 28px; border-radius: 4px; background: #4a5565; display: flex; align-items: center; justify-content: center; }
.play { width: 37px; margin-right: 4px; }
.stop { width: 32px; background: #fb2c36; }
.stop i { width: 7px; height: 6px; background: #fff; margin-top: 4px; }

/* taskbar */
.taskbar { height: 40px; flex: none; background: linear-gradient(90deg, #1f1f24 0 85%, #202024 89%, #22332a 92% 95%, #1f2022 98%); display: flex; color: #fff; }
.start { width: 48px; display: flex; align-items: center; justify-content: center; }
.search { width: 288px; background: #f1f1f1; border: 1px solid #b5b5b5; display: flex; align-items: center; padding-left: 11px; color: #333; }
.t-search { margin-left: 11px; width: 177px; font-size: 15px; letter-spacing: -.55px; }
.clover { align-self: flex-end; }
.slot { position: relative; width: 49px; display: flex; align-items: center; justify-content: center; }
.slot > svg, .cx { margin-left: 2px; }
.search + .slot > svg { margin-left: 0; }
.run::after { content: ""; position: absolute; left: 5px; bottom: 0; width: 40px; height: 2px; background: #76b9ed; }
.run.multi::after { background: linear-gradient(90deg, #76b9ed 31px, #4d7fab 31px); }
.run.current { background: linear-gradient(90deg, transparent 1px, #4c4d50 1px 45px, #343538 45px 46px, #4c4d50 46px); }
.run.current > svg { margin-left: 0; margin-right: 1px; }
.run.current::after { left: 1px; width: 48px; }
.lion-red { --shield: #f9471c; --face: #fff; }
.cx { width: 24px; height: 24px; background: #383838; font-size: 9px; line-height: 24px; text-align: center; letter-spacing: -.4px; }
.cx em { color: #2aa6dd; }
.tray { margin-left: auto; width: 995px; flex: none; display: flex; align-items: center; justify-content: flex-start; padding-left: 582px; font-size: 15px; }
.weather { position: relative; margin-right: 7px; }
.weather em { position: absolute; left: 10px; top: 0; width: 12px; height: 12px; border-radius: 50%; background: #c62f23; font-size: 9px; line-height: 12px; text-align: center; }
.t-temp { width: 38px; letter-spacing: -.8px; }
.t-sun { width: 106px; font-size: 14px; letter-spacing: -.4px; }
.up { margin-right: 9px; }
.cloud { margin-right: 10px; }
.meet { margin-right: 11px; }
.mic { margin-right: 14px; }
.pen { margin-right: 12px; }
.when { width: 54px; display: flex; flex-direction: column; align-items: center; font-size: 12px; line-height: 18px; }
.t-time, .t-date { letter-spacing: -.35px; }
.note { margin-left: 17px; }
.peek { width: 1px; height: 40px; background: #6b6c6e; margin-left: 18px; }
```
